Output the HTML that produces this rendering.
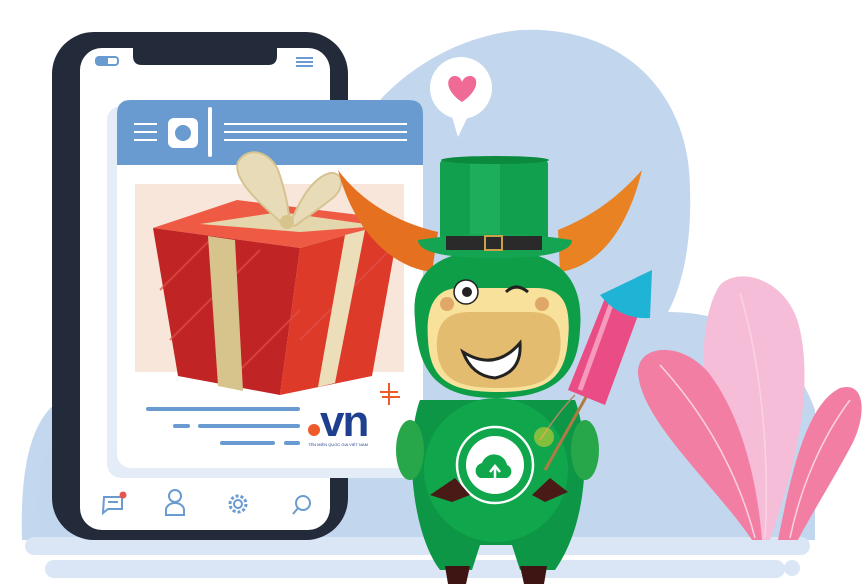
<!DOCTYPE html>
<html><head><meta charset="utf-8"><style>
html,body{margin:0;padding:0;background:#fff;width:868px;height:584px;overflow:hidden}
svg{display:block}
</style></head><body>
<svg width="868" height="584" viewBox="0 0 868 584" xmlns="http://www.w3.org/2000/svg" font-family="Liberation Sans, sans-serif">
<path d="M60 540 L60 400 C30 420 20 470 22 540 Z" fill="#c3d7ee"/>
<path d="M40 540 C30 470 50 420 100 380 L330 200 C340 120 420 40 520 30 C620 25 690 90 690 190 C692 250 680 290 668 312 C730 312 790 340 815 410 L815 540 Z" fill="#c2d7ee"/>
<rect x="25" y="537" width="785" height="18" rx="9" fill="#dae6f5"/>
<rect x="45" y="560" width="740" height="18" rx="9" fill="#dae6f5"/>
<rect x="784" y="560" width="16" height="16" rx="8" fill="#dae6f5"/>
<rect x="52" y="32" width="296" height="508" rx="42" fill="#232a3a"/>
<rect x="80" y="48" width="250" height="482" rx="22" fill="#fff"/>
<path d="M133 44 L277 44 L277 56 Q277 65 268 65 L142 65 Q133 65 133 56 Z" fill="#232a3a"/>
<rect x="96" y="57" width="22" height="8" rx="3" fill="none" stroke="#6a9bd0" stroke-width="2"/>
<rect x="97" y="58" width="11" height="6" fill="#6a9bd0"/>
<g stroke="#6a9bd0" stroke-width="2"><line x1="296" y1="58" x2="313" y2="58"/><line x1="296" y1="62" x2="313" y2="62"/><line x1="296" y1="66" x2="313" y2="66"/></g>
<rect x="107" y="106" width="310" height="372" rx="14" fill="#e3ecf7"/>
<rect x="117" y="100" width="306" height="368" rx="14" fill="#fff"/>
<path d="M131 100 L409 100 Q423 100 423 114 L423 165 L117 165 L117 114 Q117 100 131 100 Z" fill="#6a9bd0"/>
<g stroke="#fff" stroke-width="2"><line x1="134" y1="124" x2="157" y2="124"/><line x1="134" y1="132" x2="157" y2="132"/><line x1="134" y1="140" x2="157" y2="140"/>
<line x1="224" y1="124" x2="407" y2="124"/><line x1="224" y1="132" x2="407" y2="132"/><line x1="224" y1="140" x2="407" y2="140"/></g>
<rect x="168" y="118" width="30" height="30" rx="6" fill="#fff"/>
<circle cx="183" cy="133" r="8" fill="#6a9bd0"/>
<rect x="208" y="107" width="4" height="50" rx="2" fill="#fff"/>
<rect x="135" y="184" width="269" height="188" fill="#f8e6da"/>
<path d="M153 228 L237 200 L400 220 L300 248 Z" fill="#ef5a44"/>
<path d="M153 228 L300 248 L280 395 L178 376 Z" fill="#c02424"/>
<path d="M300 248 L400 220 L372 376 L280 395 Z" fill="#dd3a2a"/>
<g stroke="#e0504a" stroke-width="2" opacity=".7"><line x1="160" y1="290" x2="210" y2="240"/><line x1="170" y1="340" x2="260" y2="250"/><line x1="240" y1="370" x2="300" y2="310"/><line x1="300" y1="340" x2="390" y2="250"/></g>
<path d="M208 236 L235 240 L243 391 L218 386 Z" fill="#d7c38c"/>
<path d="M345 235 L365 230 L335 383 L318 387 Z" fill="#ebdeb9"/>
<path d="M200 224 L280 212 L380 226 L300 232 Z" fill="#e4d6ad"/>
<path d="M283 224 C262 205 232 180 238 162 C248 145 270 152 278 170 C285 190 288 205 290 224 Z" fill="#e8dcb8" stroke="#d6c391" stroke-width="2"/>
<path d="M290 224 C300 200 312 178 330 173 C345 172 345 190 330 200 C318 210 305 218 295 226 Z" fill="#e8dcb8" stroke="#d6c391" stroke-width="2"/>
<circle cx="287" cy="222" r="7" fill="#d7c38c"/>
<g stroke="#6a9bd0" stroke-width="4" stroke-linecap="round"><line x1="148" y1="409" x2="298" y2="409"/><line x1="175" y1="426" x2="188" y2="426"/><line x1="200" y1="426" x2="298" y2="426"/><line x1="222" y1="443" x2="273" y2="443"/><line x1="286" y1="443" x2="298" y2="443"/></g>
<circle cx="314" cy="430" r="6" fill="#ef5a2a"/>
<text x="320" y="436" font-size="44" font-weight="bold" fill="#1f3f8f" letter-spacing="-2">vn</text>
<g stroke="#ef5a2a" stroke-width="2"><line x1="380" y1="392" x2="398" y2="392"/><line x1="389" y1="383" x2="389" y2="405"/><line x1="382" y1="397" x2="400" y2="397"/></g>
<text x="308" y="446" font-size="4" fill="#1f3f8f">TÊN MIỀN QUỐC GIA VIỆT NAM</text>
<g fill="none" stroke="#6a9bd0" stroke-width="2">
<path d="M104 497 h18 v12 h-14 l-5 4 z"/><line x1="108" y1="502" x2="118" y2="502"/>
<circle cx="175" cy="496" r="6"/><path d="M166 515 v-5 a9 7 0 0 1 18 0 v5 z"/>
<circle cx="238" cy="504" r="4"/><circle cx="238" cy="504" r="8" stroke-dasharray="3 2" stroke-width="3"/>
<circle cx="303" cy="503" r="7"/><line x1="298" y1="508" x2="293" y2="514"/>
</g>
<circle cx="123" cy="495" r="3.5" fill="#e7564a"/>
<path d="M760 540 C700 460 690 330 720 285 C740 265 790 280 800 330 C815 400 790 480 770 540 Z" fill="#f5bdd7"/>
<path d="M752 540 C715 485 640 420 638 372 C638 345 680 340 708 372 C745 420 758 490 762 540 Z" fill="#f27fa3"/>
<path d="M778 540 C790 480 805 405 840 388 C868 380 866 420 850 448 C830 485 808 520 798 540 Z" fill="#f27fa3"/>
<g stroke="#fbd2e2" stroke-width="1.5" fill="none"><path d="M660 365 C710 420 740 480 755 538"/><path d="M740 293 C760 360 770 450 765 538"/><path d="M850 400 C820 440 800 490 790 538"/></g>
<circle cx="461" cy="88" r="31" fill="#fff"/>
<path d="M450 110 L458 137 L470 112 Z" fill="#fff"/>
<path d="M462 102 C444 90 446 76 455 76 C459 76 461 79 462 82 C463 79 466 76 470 76 C479 76 480 90 462 102 Z" fill="#f06a96"/>
<path d="M432 272 C395 268 355 235 338 170 C360 200 395 222 438 232 Z" fill="#e5701f"/>
<path d="M560 272 C605 265 630 220 642 170 C620 195 595 215 558 230 Z" fill="#e98222"/>
<path d="M420 400 C405 440 410 530 440 570 L472 570 L480 545 L512 545 L520 570 L555 570 C590 520 590 440 575 400 Z" fill="#0c9645"/>
<ellipse cx="410" cy="450" rx="14" ry="30" fill="#27a64a"/>
<ellipse cx="585" cy="450" rx="14" ry="30" fill="#27a64a"/>
<circle cx="496" cy="470" r="72" fill="#10a74c"/>
<circle cx="495" cy="465" r="38" fill="none" stroke="#fff" stroke-width="2.5"/>
<circle cx="495" cy="465" r="29" fill="#fff"/>
<path d="M480 478 a8 8 0 0 1 2 -15 a13 13 0 0 1 25 2 a7 7 0 0 1 0 13 Z" fill="#10a74c"/>
<path d="M495 478 v-10 m-5 4 l5 -6 l5 6" stroke="#fff" stroke-width="2.5" fill="none"/>
<path d="M430 495 L455 478 L470 495 L452 502 Z" fill="#4a1a16"/>
<path d="M532 495 L550 478 L568 492 L545 502 Z" fill="#4a1a16"/>
<path d="M445 566 h25 l-4 18 h-18 z M520 566 h27 l-3 18 h-20 z" fill="#3e1512"/>
<path d="M415 320 C410 270 440 250 495 250 C555 250 585 275 580 330 C578 370 560 398 495 398 C435 398 418 370 415 320 Z" fill="#0f9e48"/>
<path d="M428 340 C425 300 440 288 460 288 L535 288 C560 288 572 300 568 340 C565 380 545 392 498 392 C450 392 430 380 428 340 Z" fill="#f8e19a"/>
<path d="M437 350 C435 320 450 312 470 312 L530 312 C555 312 563 325 560 352 C556 380 540 388 498 388 C455 388 440 378 437 350 Z" fill="#e3bc70"/>
<circle cx="447" cy="304" r="7" fill="#e0a868"/><circle cx="542" cy="304" r="7" fill="#e0a868"/>
<circle cx="466" cy="292" r="12" fill="#fff" stroke="#222" stroke-width="1.5"/><circle cx="467" cy="292" r="5" fill="#222"/>
<path d="M506 292 Q516 282 528 292" stroke="#222" stroke-width="3" fill="none"/>
<path d="M463 352 Q495 372 520 343 Q522 372 495 378 Q472 376 463 352 Z" fill="#fff" stroke="#222" stroke-width="3"/>
<rect x="440" y="160" width="108" height="80" rx="4" fill="#11a04e"/>
<rect x="470" y="162" width="30" height="78" fill="#25b863" opacity=".6"/>
<ellipse cx="495" cy="160" rx="54" ry="4" fill="#0b8a3e"/>
<path d="M418 240 Q495 228 572 240 Q572 258 495 258 Q418 258 418 240 Z" fill="#15a552"/>
<rect x="446" y="236" width="96" height="14" fill="#2a2a2a"/>
<rect x="485" y="236" width="17" height="14" fill="none" stroke="#c9a24a" stroke-width="2"/>
<line x1="545" y1="470" x2="590" y2="390" stroke="#b07a45" stroke-width="3"/>
<path d="M540 440 Q560 410 575 395" stroke="#b08a65" stroke-width="1.5" fill="none"/>
<circle cx="544" cy="437" r="10" fill="#f5d530" opacity=".5"/>
<path d="M568 390 L605 298 L640 310 L605 405 Z" fill="#ea4d85"/>
<path d="M580 390 L612 302" stroke="#f59abb" stroke-width="5"/>
<path d="M600 295 L652 270 L650 318 Q620 320 600 295 Z" fill="#1fb3d6"/>
</svg>
</body></html>
